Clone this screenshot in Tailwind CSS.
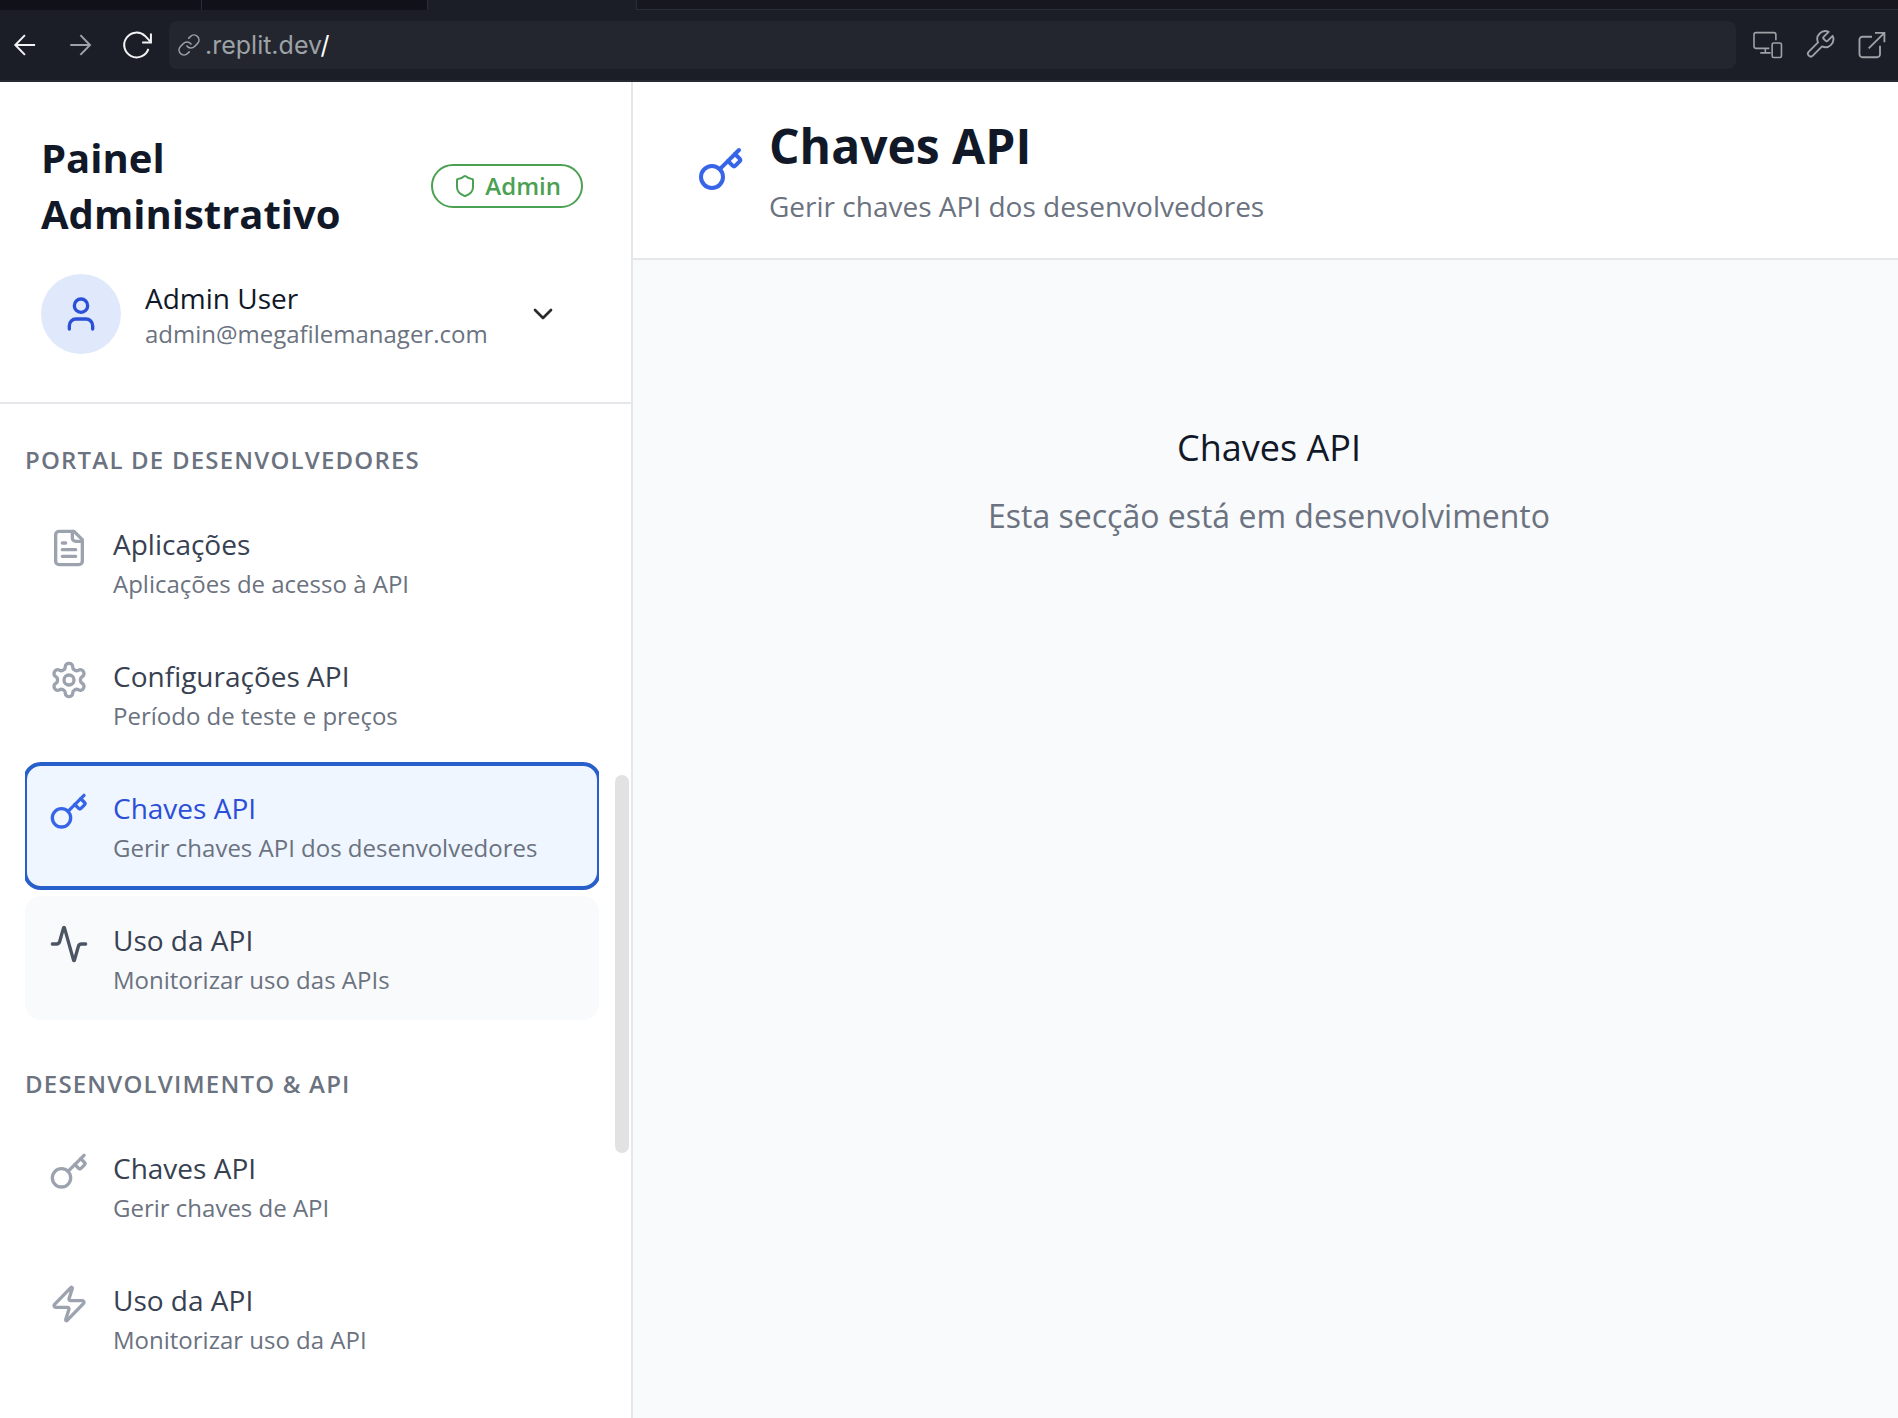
<!DOCTYPE html>
<html lang="pt">
<head>
<meta charset="utf-8">
<title>Painel Administrativo</title>
<script src="https://cdn.jsdelivr.net/npm/@tailwindcss/browser@4"></script>
</head>
<body class="flex h-screen flex-col overflow-hidden bg-white font-['Open_Sans',sans-serif] text-[#111827]">
<svg class="hidden">
  <symbol id="key" viewBox="0 0 24 24" fill="none" stroke="currentColor" stroke-width="2" stroke-linecap="round" stroke-linejoin="round"><path d="m15.5 7.5 2.3 2.3a1 1 0 0 0 1.4 0l2.1-2.1a1 1 0 0 0 0-1.4L19 4"/><path d="m21 2-9.6 9.6"/><circle cx="7.5" cy="15.5" r="5.5"/></symbol>
</svg>

<div class="shrink-0 border-b-2 border-[#272934] bg-[#1b1e26]">
  <div class="flex h-[10px]">
    <div class="w-[202px] border-r border-[#2a2c37] bg-[#11111a]"></div>
    <div class="w-[226px] border-r border-[#2a2c37] bg-[#11111a]"></div>
    <div class="w-[208px]"></div>
    <div class="flex-1 border-b border-l border-[#2a2c37] bg-[#171720]"></div>
  </div>
  <div class="flex h-[70px] items-center">
    <div class="flex w-[169px] items-center gap-6 pl-2 text-[#f2f3f5]">
      <button aria-label="Voltar"><svg class="size-8" viewBox="0 0 24 24" fill="none" stroke="currentColor" stroke-width="1.5"><path d="M20.300 12H5.500M12.700 4.600 5.500 12l7.200 7.400"/></svg></button>
      <button aria-label="Avançar" class="text-[#9da2a6]"><svg class="size-8" viewBox="0 0 24 24" fill="none" stroke="currentColor" stroke-width="1.5"><path d="M4.700 12h14.800M12.300 4.600l7.200 7.400-7.200 7.400"/></svg></button>
      <button aria-label="Recarregar"><svg class="size-8" viewBox="0 0 24 24" fill="none" stroke="currentColor" stroke-width="1.5"><path d="M21.300 14.900A9.300 9.300 0 1 1 18.800 5.200L23 9.700"/><path d="M23.200 3.300v6.800h-6.600"/></svg></button>
    </div>
    <div class="flex h-12 flex-1 items-center gap-1 rounded-lg bg-[#23262e] pl-2 text-[#9da2a6]">
      <svg class="size-6" viewBox="0 0 24 24" fill="none" stroke="currentColor" stroke-width="1.6" stroke-linecap="round" stroke-linejoin="round"><path d="M10 13a5 5 0 0 0 7.540.540l3-3a5 5 0 0 0-7.070-7.070l-1.720 1.710"/><path d="M14 11a5 5 0 0 0-7.540-.540l-3 3a5 5 0 0 0 7.070 7.070l1.710-1.710"/></svg>
      <span class="font-[Inter,sans-serif] text-[25px] leading-8">.replit.dev<span class="text-white">/</span></span>
    </div>
    <div class="flex w-[162px] items-center gap-5 pl-4 text-[#9da2a6]">
      <button aria-label="Dispositivos"><svg class="size-8" viewBox="0 0 24 24" fill="none" stroke="currentColor" stroke-width="1.2"><path d="M17.900 8.500V4.200a1.500 1.500 0 0 0-1.500-1.500H3a1.500 1.500 0 0 0-1.500 1.500v8.800A1.500 1.500 0 0 0 3 14.500h10M10 14.500v3.400M6.200 17.900h7.800"/><rect x="15.100" y="10.500" width="7" height="10.900" rx="1.200"/></svg></button>
      <button aria-label="Ferramentas"><svg class="size-8" viewBox="0 0 24 24" fill="none" stroke="currentColor" stroke-width="1.4" stroke-linejoin="round"><path transform="translate(0 -.4)" d="M14.700 6.300a1 1 0 0 0 0 1.400l1.600 1.600a1 1 0 0 0 1.400 0l3.770-3.770a6 6 0 0 1-7.940 7.940l-6.910 6.910a2.120 2.120 0 0 1-3-3l6.910-6.910a6 6 0 0 1 7.940-7.940z"/></svg></button>
      <button aria-label="Abrir em nova janela"><svg class="size-8" viewBox="0 0 24 24" fill="none" stroke="currentColor" stroke-width="1.4"><path d="M14.200 2.900h7.100v7.100M21.300 2.900 9.500 14.500M12 5.800H4.800a2.200 2.200 0 0 0-2.200 2.200v11a2.200 2.200 0 0 0 2.200 2.200h11a2.200 2.200 0 0 0 2.200-2.200v-6.500"/></svg></button>
    </div>
  </div>
</div>

<div class="flex min-h-0 flex-1">
  <aside class="relative flex w-[633px] shrink-0 flex-col border-r-2 border-[#e5e7eb]">
    <div class="border-b-2 border-[#e5e7eb] py-12 pr-12 pl-[41px]">
      <div class="flex items-center justify-between">
        <h2 class="text-[40px] leading-14 font-bold">Painel Administrativo</h2>
        <span class="flex h-11 shrink-0 items-center gap-2 rounded-full border-2 border-[#4ba152] px-5 text-2xl font-semibold text-[#4ba152]">
          <svg class="size-6" viewBox="0 0 24 24" fill="none" stroke="currentColor" stroke-width="2" stroke-linecap="round" stroke-linejoin="round"><path d="M20 13c0 5-3.500 7.500-7.660 8.950a1 1 0 0 1-.670-.010C7.500 20.500 4 18 4 13V6a1 1 0 0 1 1-1c2 0 4.500-1.200 6.240-2.720a1.170 1.170 0 0 1 1.520 0C14.510 3.810 17 5 19 5a1 1 0 0 1 1 1z"/></svg>
          Admin
        </span>
      </div>
      <button class="mt-8 flex w-full items-center gap-6 pr-6 text-left">
        <span class="flex size-20 items-center justify-center rounded-full bg-[#dfe9fb] text-[#2b4fd6]">
          <svg class="size-10" viewBox="0 0 24 24" fill="none" stroke="currentColor" stroke-width="2" stroke-linecap="round" stroke-linejoin="round"><path d="M19 21v-2a4 4 0 0 0-4-4H9a4 4 0 0 0-4 4v2"/><circle cx="12" cy="7" r="4"/></svg>
        </span>
        <span class="flex-1">
          <span class="block text-[28px] leading-10 font-medium">Admin User</span>
          <span class="block text-2xl leading-8 text-[#6b7280]">admin@megafilemanager.com</span>
        </span>
        <svg class="size-8 text-[#2b2b2b]" viewBox="0 0 24 24" fill="none" stroke="currentColor" stroke-width="2" stroke-linecap="round" stroke-linejoin="round"><path d="m6 9 6 6 6-6"/></svg>
      </button>
    </div>

    <nav class="flex min-h-0 flex-1 flex-col gap-12 overflow-hidden pt-10 pr-8 pl-[25px]">
      <section>
        <h3 class="mb-6 text-2xl leading-8 font-semibold tracking-wider text-[#6b7280] uppercase">Portal de Desenvolvedores</h3>
        <ul class="flex flex-col gap-2 overflow-x-clip">
          <li><a href="#" class="flex gap-6 rounded-2xl p-6">
            <svg class="mt-1 size-10 shrink-0 text-[#9ca3af]" viewBox="0 0 24 24" fill="none" stroke="currentColor" stroke-width="2" stroke-linecap="round" stroke-linejoin="round"><path d="M15 2H6a2 2 0 0 0-2 2v16a2 2 0 0 0 2 2h12a2 2 0 0 0 2-2V7Z"/><path d="M14 2v4a2 2 0 0 0 2 2h4M10 9H8M16 13H8M16 17H8"/></svg>
            <span><span class="block text-[28px] leading-10 font-medium text-[#374151]">Aplicações</span><span class="mt-1 block text-2xl leading-8 text-[#6b7280]">Aplicações de acesso à API</span></span>
          </a></li>
          <li><a href="#" class="flex gap-6 rounded-2xl p-6">
            <svg class="mt-1 size-10 shrink-0 text-[#9ca3af]" viewBox="0 0 24 24" fill="none" stroke="currentColor" stroke-width="2" stroke-linecap="round" stroke-linejoin="round"><path d="M12.220 2h-.440a2 2 0 0 0-2 2v.180a2 2 0 0 1-1 1.730l-.430.250a2 2 0 0 1-2 0l-.150-.080a2 2 0 0 0-2.730.730l-.220.380a2 2 0 0 0 .730 2.730l.150.100a2 2 0 0 1 1 1.720v.510a2 2 0 0 1-1 1.740l-.150.090a2 2 0 0 0-.730 2.730l.220.380a2 2 0 0 0 2.730.730l.150-.080a2 2 0 0 1 2 0l.430.250a2 2 0 0 1 1 1.730V20a2 2 0 0 0 2 2h.440a2 2 0 0 0 2-2v-.180a2 2 0 0 1 1-1.730l.430-.250a2 2 0 0 1 2 0l.150.080a2 2 0 0 0 2.730-.730l.220-.390a2 2 0 0 0-.730-2.730l-.150-.080a2 2 0 0 1-1-1.740v-.500a2 2 0 0 1 1-1.740l.150-.090a2 2 0 0 0 .730-2.730l-.220-.380a2 2 0 0 0-2.730-.730l-.150.080a2 2 0 0 1-2 0l-.430-.250a2 2 0 0 1-1-1.730V4a2 2 0 0 0-2-2z"/><circle cx="12" cy="12" r="3"/></svg>
            <span><span class="block text-[28px] leading-10 font-medium text-[#374151]">Configurações API</span><span class="mt-1 block text-2xl leading-8 text-[#6b7280]">Período de teste e preços</span></span>
          </a></li>
          <li><a href="#" aria-current="page" class="flex gap-6 rounded-2xl bg-[#eff6ff] p-6 outline-4 -outline-offset-2 outline-[#2860cb]">
            <svg class="mt-1 size-10 shrink-0 text-[#3765e8]"><use href="#key"/></svg>
            <span><span class="block text-[28px] leading-10 font-medium text-[#2b4fd6]">Chaves API</span><span class="mt-1 block text-2xl leading-8 text-[#6b7280]">Gerir chaves API dos desenvolvedores</span></span>
          </a></li>
          <li><a href="#" class="flex gap-6 rounded-2xl bg-[#f9fafc] p-6">
            <svg class="mt-1 size-10 shrink-0 text-[#4b5563]" viewBox="0 0 24 24" fill="none" stroke="currentColor" stroke-width="2" stroke-linecap="round" stroke-linejoin="round"><path d="M22 12h-2.480a2 2 0 0 0-1.930 1.460l-2.350 8.360a.25.25 0 0 1-.480 0L9.240 2.180a.25.25 0 0 0-.480 0l-2.350 8.360A2 2 0 0 1 4.490 12H2"/></svg>
            <span><span class="block text-[28px] leading-10 font-medium text-[#374151]">Uso da API</span><span class="mt-1 block text-2xl leading-8 text-[#6b7280]">Monitorizar uso das APIs</span></span>
          </a></li>
        </ul>
      </section>
      <section>
        <h3 class="mb-6 text-2xl leading-8 font-semibold tracking-wider text-[#6b7280] uppercase">Desenvolvimento &amp; API</h3>
        <ul class="flex flex-col gap-2">
          <li><a href="#" class="flex gap-6 rounded-2xl p-6">
            <svg class="mt-1 size-10 shrink-0 text-[#9ca3af]"><use href="#key"/></svg>
            <span><span class="block text-[28px] leading-10 font-medium text-[#374151]">Chaves API</span><span class="mt-1 block text-2xl leading-8 text-[#6b7280]">Gerir chaves de API</span></span>
          </a></li>
          <li><a href="#" class="flex gap-6 rounded-2xl p-6">
            <svg class="mt-1 size-10 shrink-0 text-[#9ca3af]" viewBox="0 0 24 24" fill="none" stroke="currentColor" stroke-width="2" stroke-linecap="round" stroke-linejoin="round"><path d="M4 14a1 1 0 0 1-.780-1.630l9.900-10.200a.5.5 0 0 1 .860.460l-1.920 6.020A1 1 0 0 0 13 10h7a1 1 0 0 1 .780 1.630l-9.900 10.200a.5.5 0 0 1-.860-.460l1.920-6.020A1 1 0 0 0 11 14z"/></svg>
            <span><span class="block text-[28px] leading-10 font-medium text-[#374151]">Uso da API</span><span class="mt-1 block text-2xl leading-8 text-[#6b7280]">Monitorizar uso da API</span></span>
          </a></li>
        </ul>
      </section>
    </nav>
    <div class="absolute top-[693px] right-[2px] h-[378px] w-[14px] rounded-full bg-[#e2e2e2]"></div>
  </aside>

  <main class="flex min-w-0 flex-1 flex-col bg-[#f9fafc]">
    <header class="flex items-center gap-6 border-b-2 border-[#e5e7eb] bg-white px-16 py-8">
      <svg class="size-12 shrink-0 text-[#3765e8]"><use href="#key"/></svg>
      <div>
        <h1 class="text-5xl leading-16 font-bold">Chaves API</h1>
        <p class="mt-2 text-[28px] leading-10 text-[#6b7280]">Gerir chaves API dos desenvolvedores</p>
      </div>
    </header>
    <div class="py-40 pl-[7px] text-center">
      <h3 class="text-4xl leading-14 font-medium">Chaves API</h3>
      <p class="mt-4 text-[32px] leading-12 text-[#6b7280]">Esta secção está em desenvolvimento</p>
    </div>
  </main>
</div>
</body>
</html>
